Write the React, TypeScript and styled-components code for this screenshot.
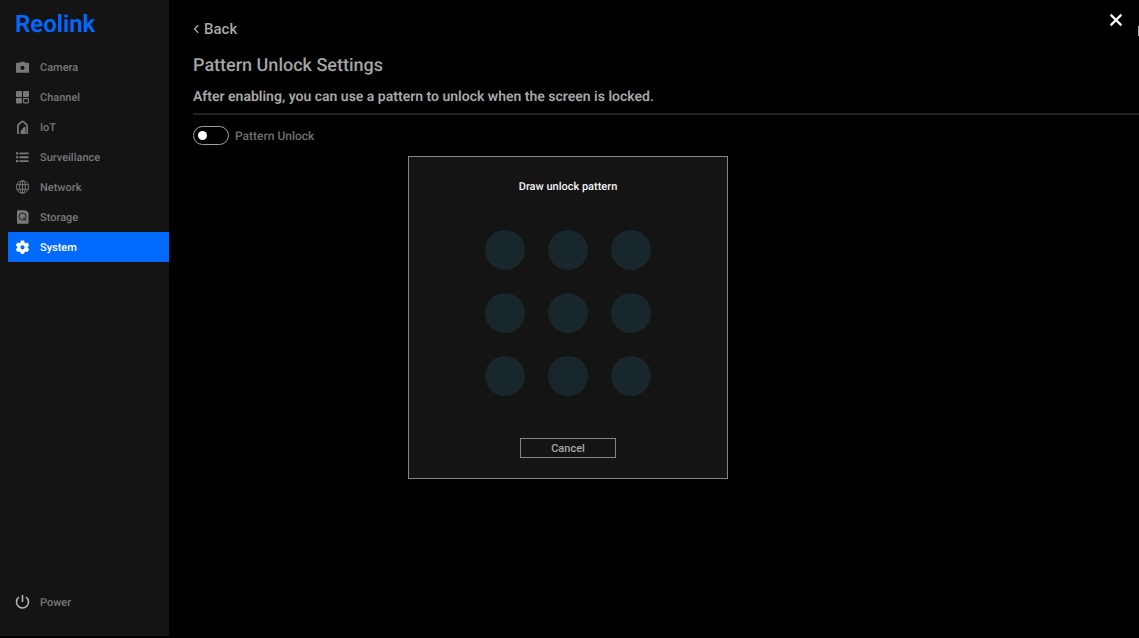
import React, { useState } from "react";
import styled, { createGlobalStyle, css } from "styled-components";

const GlobalStyle = createGlobalStyle`
  * { box-sizing: border-box; }
  html, body, #root { height: 100%; }
  body {
    margin: 0;
    background: #000;
    font-family: Roboto, "Liberation Sans", sans-serif;
    font-weight: 500;
    text-rendering: geometricPrecision;
    overflow: hidden;
  }
  button { font: inherit; cursor: pointer; }
`;

const Page = styled.div`
  display: flex;
  min-height: 100vh;
  padding-bottom: 2px;
`;

const Sidebar = styled.aside`
  display: flex;
  flex-direction: column;
  flex: none;
  width: 169px;
  padding: 10px 0 19px 8px;
  background: #141414;
`;

const Logo = styled.a`
  padding-left: 7px;
  margin-bottom: 14px;
  color: #006aff;
  font-size: 24px;
  font-weight: 600;
  line-height: 28px;
  text-decoration: none;
`;

const Nav = styled.nav`
  display: flex;
  flex-direction: column;
  flex: 1;
`;

const NavItem = styled.a<{ $active?: boolean; $bright?: boolean }>`
  display: flex;
  align-items: center;
  gap: 10px;
  height: 30px;
  padding-left: 7px;
  color: #787878;
  font-size: 11px;
  line-height: 14px;
  text-decoration: none;
  ${(p) => p.$active && css`
    background: #006aff;
    color: #fff;
  `}
  svg {
    flex: none;
    color: ${(p) => (p.$bright ? "#b4b4b4" : "inherit")};
  }
`;

const NavLabel = styled.span`
  padding-top: 2px;
`;

const Main = styled.main`
  flex: 1;
  min-width: 0;
  padding: 19px 0 0 24px;
`;

const BackButton = styled.button`
  display: flex;
  align-items: center;
  gap: 4px;
  height: 20px;
  padding: 0;
  border: 0;
  background: none;
  color: #a8a8a8;
  font-size: 15px;
`;

const Title = styled.h1`
  margin: 15px 0 0;
  color: #a4a4a4;
  font-size: 18px;
  font-weight: 500;
  line-height: 24px;
`;

const Description = styled.p`
  margin: 9px 0 0;
  padding-bottom: 6px;
  border-bottom: 2px solid #242424;
  color: #a8a8a8;
  font-size: 14px;
  font-weight: 600;
  line-height: 20px;
`;

const SwitchRow = styled.label`
  display: flex;
  align-items: flex-start;
  gap: 6px;
  width: max-content;
  margin-top: 11px;
  color: #707070;
  font-size: 12px;
  line-height: 20px;
`;

const Switch = styled.input`
  appearance: none;
  display: flex;
  align-items: center;
  width: 36px;
  height: 19px;
  margin: 0;
  padding: 0 4px;
  border: 1px solid #a0a0a0;
  border-radius: 10px;
  &::before {
    content: "";
    width: 9px;
    height: 9px;
    border-radius: 50%;
    background: #fff;
  }
  &:checked {
    justify-content: flex-end;
    background: #006aff;
  }
`;

const Close = styled.button`
  position: absolute;
  top: 12px;
  right: 15px;
  display: flex;
  padding: 0;
  border: 0;
  background: none;
  color: #f4f4f4;
`;

const EdgeHandle = styled.span`
  position: absolute;
  top: 26px;
  right: 0;
  width: 1px;
  height: 10px;
  background: #a8a8a8;
`;

const Overlay = styled.div`
  position: fixed;
  inset: 0;
  display: flex;
  align-items: center;
  justify-content: center;
  padding: 0 3px 3px 0;
  pointer-events: none;
`;

const Dialog = styled.section`
  display: flex;
  flex-direction: column;
  align-items: center;
  width: 320px;
  padding: 22px 0 20px;
  border: 1px solid #858585;
  background: #141414;
  pointer-events: auto;
`;

const DialogTitle = styled.h2`
  margin: 0;
  color: #f4f4f4;
  font-size: 11px;
  font-weight: 500;
  line-height: 16px;
`;

const PatternGrid = styled.div`
  display: grid;
  grid-template-columns: repeat(3, 40px);
  gap: 23px;
  margin: 35px 0 42px;
`;

const Dot = styled.button`
  height: 40px;
  padding: 0;
  border: 0;
  border-radius: 50%;
  background: #17272b;
`;

const CancelButton = styled.button`
  width: 96px;
  height: 20px;
  padding: 1px 0 0;
  border: 1px solid #858585;
  background: none;
  color: #a8a8a8;
  font-size: 11px;
  line-height: 18px;
`;

const Icon = ({ children }: { children: React.ReactNode }) => (
  <svg width="15" height="15" viewBox="0 0 15 15" fill="currentColor" aria-hidden="true">
    {children}
  </svg>
);

const CameraIcon = () => (
  <Icon>
    <path fillRule="evenodd" d="M4.9 2.8 5.7 1.7h3.6l.8 1.1h3q.9 0 .9.9v8.2q0 .9-.9.9H1.9q-.9 0-.9-.9V3.7q0-.9.9-.9zM7.5 5.7a2.1 2.1 0 1 0 0 4.2 2.1 2.1 0 0 0 0-4.2z" />
  </Icon>
);

const ChannelIcon = () => (
  <Icon>
    <rect x="1" y="1" width="6" height="6" rx=".9" />
    <rect x="8" y="1" width="6" height="6" rx=".9" />
    <rect x="1" y="8" width="6" height="5.4" rx=".9" />
    <rect x="8.6" y="8.6" width="4.8" height="4.2" rx=".5" fill="none" stroke="currentColor" strokeWidth="1.2" />
  </Icon>
);

const IotIcon = () => (
  <Icon>
    <path d="M4.4 13H2.9V6Q2.9 5.1 3.6 4.5L6.8 1.7q.7-.6 1.4 0l3.2 2.8q.7.6.7 1.5v7.9" fill="none" stroke="currentColor" strokeWidth="1.7" />
    <path d="M5.7 13.9V10.3L7.6 9.4V8l3-1.5v7.4z" />
  </Icon>
);

const ListIcon = () => (
  <Icon>
    <path d="M1 2.3h2.3v2.1H1zM1 6.2h2.3v2.1H1zM1 10.1h2.3v2.1H1zM4.4 2.4h9.2v1.9H4.4zM4.4 6.3h9.2v1.9H4.4zM4.4 10.2h9.2v1.9H4.4z" />
  </Icon>
);

const GlobeIcon = () => (
  <Icon>
    <g fill="none" stroke="currentColor" strokeWidth="1">
      <circle cx="7.5" cy="7" r="6.2" />
      <ellipse cx="7.5" cy="7" rx="2.9" ry="6.2" />
      <path d="M7.5.8v12.4M1.9 4.7h11.2M1.9 9.3h11.2" />
    </g>
  </Icon>
);

const StorageIcon = () => (
  <Icon>
    <path d="M2.9.2h7.7l3 2.6v10q0 .9-.9.9H2.9q-.9 0-.9-.9V1.1q0-.9.9-.9z" />
    <circle cx="7.5" cy="6.5" r="3.5" fill="none" stroke="#141414" strokeWidth=".9" />
    <path d="m8.2 7.4 3.2 3.6" stroke="#141414" strokeWidth=".9" />
  </Icon>
);

const GearIcon = () => (
  <Icon>
    <path fillRule="evenodd" d="M5.9.5h3.2l.5 2.1 1 .6 2-.7 1.6 2.8-1.5 1.4v1.2l1.5 1.4-1.6 2.8-2-.7-1 .6-.5 2.1H5.9l-.5-2.1-1-.6-2 .7L.8 9.3l1.5-1.4V6.7L.8 5.3l1.6-2.8 2 .7 1-.6zM7.5 5.2a2.1 2.1 0 1 0 0 4.2 2.1 2.1 0 0 0 0-4.2z" />
  </Icon>
);

const PowerIcon = () => (
  <Icon>
    <path d="M4 2.1A6 6 0 1 0 11 2.1M7.5.1v7" fill="none" stroke="currentColor" strokeWidth="1.6" />
  </Icon>
);

const items = [
  { label: "Camera", icon: CameraIcon },
  { label: "Channel", icon: ChannelIcon },
  { label: "IoT", icon: IotIcon },
  { label: "Surveillance", icon: ListIcon },
  { label: "Network", icon: GlobeIcon },
  { label: "Storage", icon: StorageIcon },
  { label: "System", icon: GearIcon },
];

export default function App() {
  const [enabled, setEnabled] = useState(false);

  return (
    <>
      <GlobalStyle />
      <Page>
        <Sidebar>
          <Logo href="#">Reolink</Logo>
          <Nav>
            {items.map(({ label, icon: ItemIcon }) => (
              <NavItem key={label} href="#" $active={label === "System"}>
                <ItemIcon />
                <NavLabel>{label}</NavLabel>
              </NavItem>
            ))}
          </Nav>
          <NavItem href="#" $bright>
            <PowerIcon />
            <NavLabel>Power</NavLabel>
          </NavItem>
        </Sidebar>
        <Main>
          <BackButton>
            <svg width="7" height="10" viewBox="0 0 7 10" fill="none" stroke="currentColor" strokeWidth="1.3" aria-hidden="true">
              <path d="M5.3 1.2 1.5 5l3.8 3.8" />
            </svg>
            Back
          </BackButton>
          <Title>Pattern Unlock Settings</Title>
          <Description>After enabling, you can use a pattern to unlock when the screen is locked.</Description>
          <SwitchRow>
            <Switch type="checkbox" role="switch" checked={enabled} onChange={(e) => setEnabled(e.target.checked)} />
            Pattern Unlock
          </SwitchRow>
        </Main>
      </Page>
      <Close aria-label="Close">
        <svg width="16" height="16" viewBox="0 0 16 16" fill="none" stroke="currentColor" strokeWidth="2.2" aria-hidden="true">
          <path d="m2.6 2.6 10.8 10.8M13.4 2.6 2.6 13.4" />
        </svg>
      </Close>
      <EdgeHandle />
      <Overlay>
        <Dialog role="dialog" aria-labelledby="pattern-title">
          <DialogTitle id="pattern-title">Draw unlock pattern</DialogTitle>
          <PatternGrid>
            {Array.from({ length: 9 }, (_, i) => (
              <Dot key={i} aria-label={`Dot ${i + 1}`} />
            ))}
          </PatternGrid>
          <CancelButton>Cancel</CancelButton>
        </Dialog>
      </Overlay>
    </>
  );
}
